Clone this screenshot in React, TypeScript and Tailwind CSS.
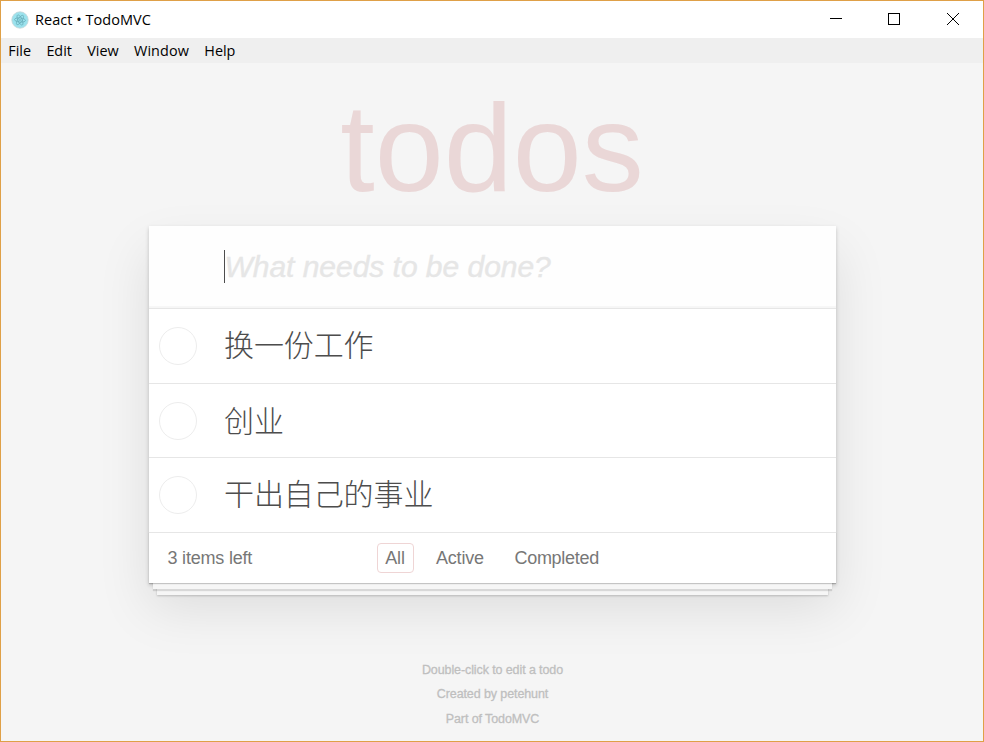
const todos = [
  { text: '换一份工作', height: 'h-[75px]', label: 'mb-[2px]' },
  { text: '创业', height: 'h-[74px]', label: 'mt-px' },
  { text: '干出自己的事业', height: 'h-[75px]', label: 'mb-[2px]' },
];

export default function App() {
  return (
    <div className="flex h-[742px] w-[984px] flex-col overflow-hidden border border-[#dfa047] bg-[#f5f5f5] font-['Liberation_Sans','Noto_Sans_CJK_SC',sans-serif]">
      <header className="flex h-[37px] shrink-0 items-center bg-white pl-[10px] font-['Open_Sans',sans-serif]">
        <svg width="18" height="18" viewBox="0 0 18 18" fill="none">
          <circle cx="9" cy="9" r="8.2" fill="#9be2ed" stroke="#c3d5d8" strokeWidth=".8" />
          <g stroke="#65abb7" strokeWidth=".7">
            <ellipse cx="9" cy="9" rx="5.5" ry="2.1" transform="rotate(5 9 9)" />
            <ellipse cx="9" cy="9" rx="5.5" ry="2.1" transform="rotate(65 9 9)" />
            <ellipse cx="9" cy="9" rx="5.5" ry="2.1" transform="rotate(125 9 9)" />
          </g>
          <circle cx="9" cy="9" r=".8" fill="#5da3b0" />
        </svg>
        <span className="ml-1.5 text-[14.5px] tracking-[0.04px] whitespace-nowrap text-black">React • TodoMVC</span>
        <svg className="ml-auto" width="176" height="37" viewBox="807 1 176 37" fill="none" stroke="#000" shapeRendering="crispEdges">
          <path d="M830 18.5h12" />
          <rect x="888.5" y="13.5" width="11" height="11" />
          <path d="M947 13l12 12M959 13l-12 12" shapeRendering="auto" />
        </svg>
      </header>
      <nav className="flex h-[25px] shrink-0 items-center gap-[15.3px] bg-[#efefef] pl-[7.3px] font-['Open_Sans',sans-serif] text-[14.4px] text-black">
        <span>File</span><span>Edit</span><span>View</span><span className="tracking-[0.1px]">Window</span><span>Help</span>
      </nav>
      <main className="flex flex-col items-center">
        <h1 className="mt-[21px] h-[142px] text-[124px] leading-[128px] text-[#ead7d7]">todos</h1>
        <section className="w-[687px] bg-white shadow-[0_2px_4px_0_rgba(0,0,0,0.2),0_25px_50px_0_rgba(0,0,0,0.1)]">
          <div className="flex h-[82px] items-center bg-[#fefefe] pl-[75px] shadow-[inset_0_-2px_1px_rgba(0,0,0,0.03)]">
            <i className="mb-px h-[33px] w-px bg-[#4d4d4d]" />
            <span className="mb-px text-[30px] tracking-[-0.03px] text-[#e6e6e6] italic [-webkit-text-stroke:0.4px_#e6e6e6]">What needs to be done?</span>
          </div>
          {todos.map(({ text, height, label }) => (
            <div key={text} className={`flex items-center border-t border-[#e6e6e6] pl-[10px] ${height}`}>
              <i className="size-[38px] rounded-full border border-[#ededed]" />
              <span className={`ml-[27.5px] text-[30px] tracking-[-0.1px] font-light text-[#4d4d4d] ${label}`}>{text}</span>
            </div>
          ))}
          <footer className="flex h-[51px] items-center border-t border-[#e6e6e6] pl-[19px] text-[18px] tracking-[-0.2px] text-[#777] shadow-[0_1px_1px_rgba(0,0,0,0.2),0_10px_0_-4px_#f6f6f6,0_12px_1px_-4px_rgba(0,0,0,0.12),0_20px_0_-8px_#f6f6f6,0_21px_2px_-8px_rgba(0,0,0,0.2)]">
            <span className="w-[209px]">3 items left</span>
            <span className="flex h-[30px] w-[37px] items-center justify-center rounded-[4px] border border-[#efd5d5]">All</span>
            <span className="ml-[22.5px] w-[48px]">Active</span>
            <span className="ml-[30.5px] tracking-[-0.3px]">Completed</span>
          </footer>
        </section>
        <footer className="mt-[74.5px] pl-px text-center text-[12.5px] leading-[24.5px] tracking-[-0.1px] text-[#bfbfbf] [-webkit-text-stroke:0.3px_#bfbfbf]">
          <p>Double-click to edit a todo</p><p>Created by petehunt</p><p>Part of TodoMVC</p>
        </footer>
      </main>
    </div>
  );
}
